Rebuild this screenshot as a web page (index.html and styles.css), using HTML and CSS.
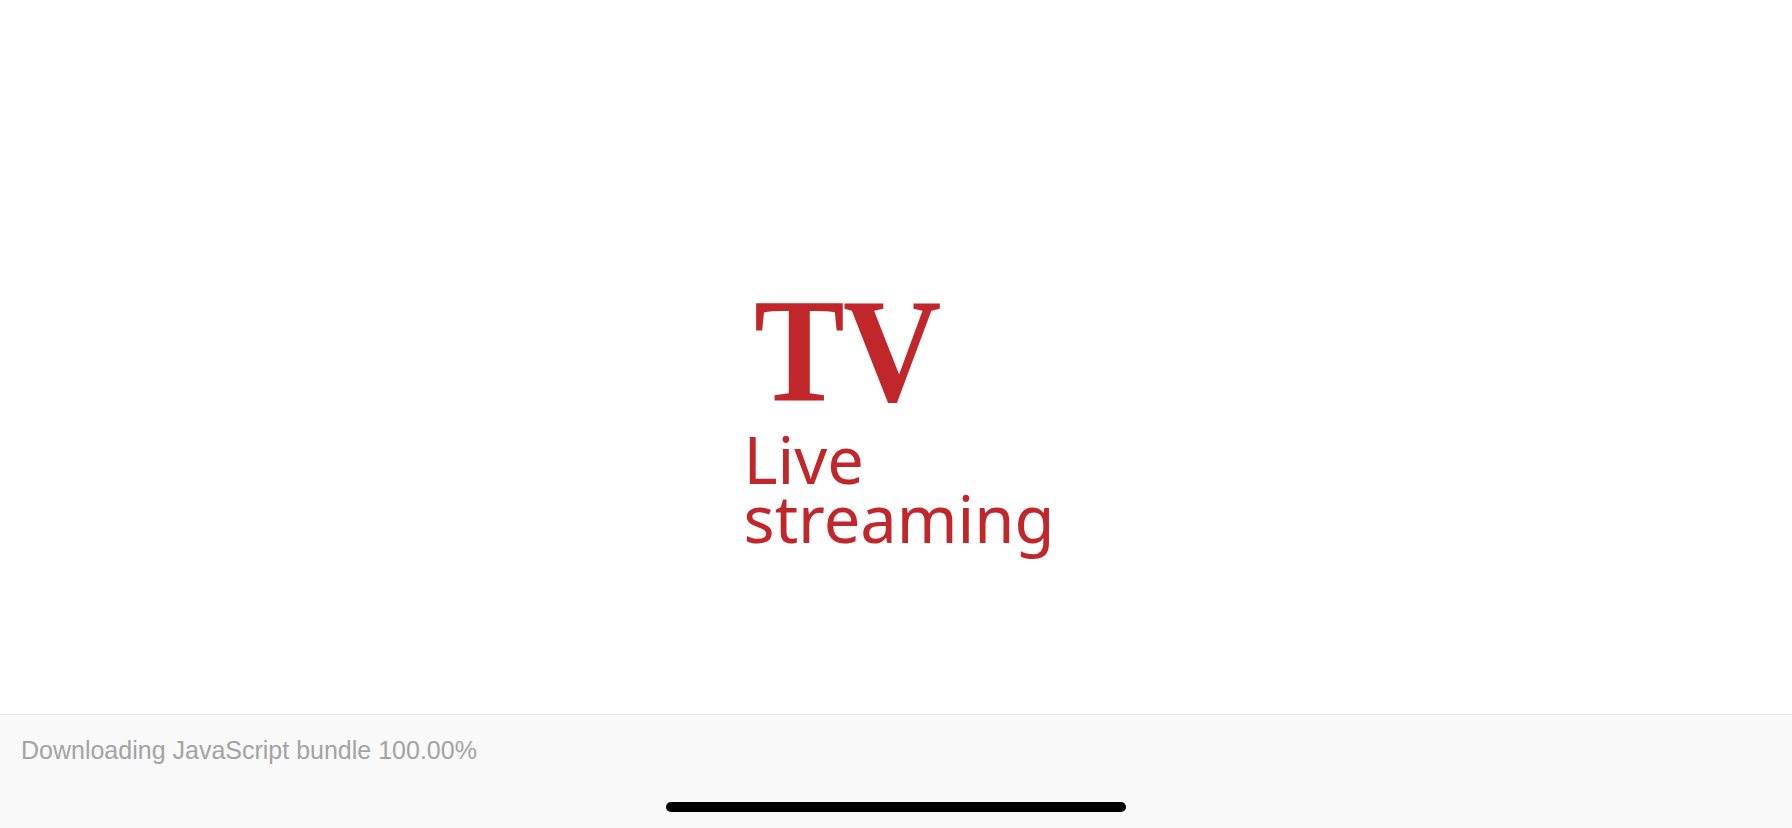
FILE: index.html
```html
<!DOCTYPE html>
<html lang="en">
<head>
<meta charset="utf-8">
<title>TV Live streaming</title>
<link rel="stylesheet" href="styles.css">
</head>
<body>
<div class="app">
  <main class="splash">
    <div class="logo">
      <div class="logo-tv">TV</div>
      <div class="logo-sub">Live<br>streaming</div>
    </div>
  </main>
  <footer class="status">
    <div class="status-text">Downloading JavaScript bundle 100.00%</div>
    <div class="home-row"><div class="home-indicator"></div></div>
  </footer>
</div>
</body>
</html>
```
FILE: styles.css
```css
html, body {
  margin: 0;
  padding: 0;
  background: #ffffff;
}
.app {
  width: 1792px;
  height: 828px;
  display: flex;
  flex-direction: column;
  overflow: hidden;
}
.splash {
  flex: 0 0 714px;
  display: flex;
  justify-content: center;
  align-items: flex-start;
  padding-top: 277px;
  box-sizing: border-box;
}
.logo {
  display: flex;
  flex-direction: column;
  align-items: flex-start;
  color: #c1272a;
  width: 305px;
}
.logo-tv {
  font-family: "Liberation Serif", serif;
  font-weight: bold;
  font-size: 148px;
  line-height: 148px;
  letter-spacing: -2px;
  margin-left: 10px;
  height: 140px;
  transform: scaleX(0.92);
  transform-origin: left center;
}
.logo-sub {
  font-family: "Noto Sans", sans-serif;
  font-size: 65px;
  line-height: 59px;
  margin-top: 13px;
}
.status {
  flex: 1;
  background: #f9f9f9;
  border-top: 1px solid #ececec;
  display: flex;
  flex-direction: column;
  justify-content: space-between;
}
.status-text {
  font-family: "Liberation Sans", sans-serif;
  font-size: 25px;
  line-height: 29px;
  color: #a3a3a3;
  padding: 21px 0 0 21px;
}
.home-row {
  display: flex;
  justify-content: center;
  padding-bottom: 16px;
}
.home-indicator {
  width: 460px;
  height: 10px;
  border-radius: 5px;
  background: #000;
}
```
